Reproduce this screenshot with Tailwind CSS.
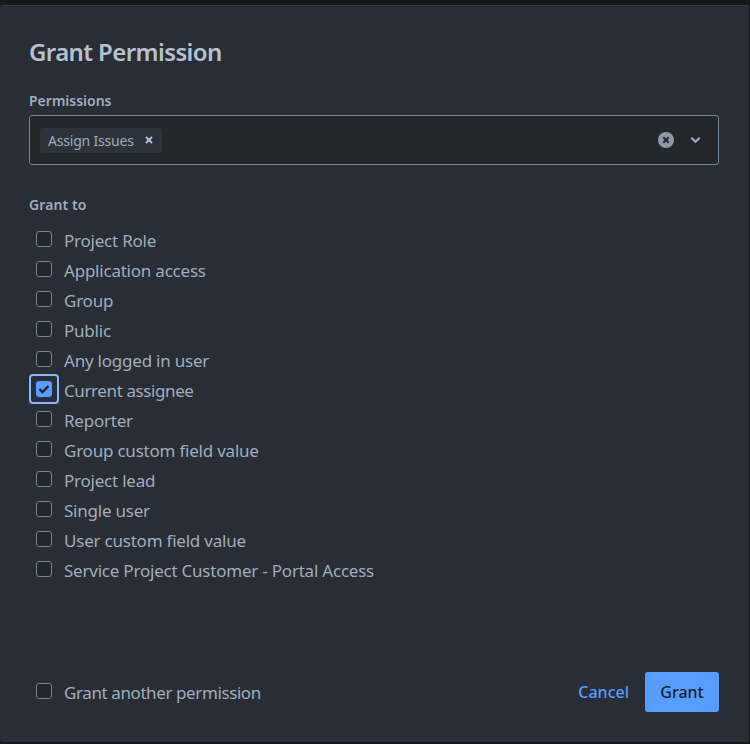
<!DOCTYPE html>
<html><head><meta charset="utf-8">
<script src="https://cdn.jsdelivr.net/npm/@tailwindcss/browser@4"></script>
</head>
<body class="m-0 bg-[#16181b]">
<div class="w-[750px] h-[744px] overflow-hidden bg-[#16191c] pt-[5px] font-['Noto_Sans',sans-serif]">
  <div class="w-[749px] h-[737px] rounded-[3px] bg-[#292e36] border-t border-[#343b44] px-[29px] flex flex-col">
    <h1 class="mt-[30px] h-[32px] leading-[32px] text-[24px] font-semibold tracking-[-0.6px] text-[#b6c2cf]">Grant Permission</h1>
    <div class="mt-[23px] h-[20px] leading-[20px] text-[14px] font-semibold text-[#9fadbc]">Permissions</div>
    <div class="mt-[4px] h-[50px] w-[690px] rounded-[3px] border border-[#738496] bg-[#22272b] flex items-center pl-[10px] pr-[17px]">
      <div class="h-[25px] rounded-[3px] bg-[#2c333a] flex items-center pl-[8px] pr-[9px] text-[14px] tracking-[-0.2px] text-[#9fadbc]">
        <span>Assign Issues</span>
        <svg class="ml-[11px]" width="8" height="8" viewBox="0 0 8 8"><path d="M1 1L7 7M7 1L1 7" stroke="#b6c2cf" stroke-width="2"/></svg>
      </div>
      <svg class="ml-auto" width="16" height="16" viewBox="0 0 16 16"><circle cx="8" cy="8" r="8" fill="#8c9bab"/><path d="M5.3 5.3L10.7 10.7M10.7 5.3L5.3 10.7" stroke="#22272b" stroke-width="2"/></svg>
      <svg class="ml-[16px]" width="11" height="8" viewBox="0 0 11 8"><path d="M1.3 1.7L5.5 5.7L9.7 1.7" fill="none" stroke="#9fadbc" stroke-width="2.2"/></svg>
    </div>
    <div class="mt-[30px] h-[20px] leading-[20px] text-[14px] font-semibold tracking-[0.1px] text-[#9fadbc]">Grant to</div>
    <ul class="mt-[10px] flex flex-col text-[#9fadbc] text-[17px] tracking-[-0.22px]">
      <li class="h-[30px] pt-[2px] flex items-center"><span class="ml-[7px] mb-[4px] w-[14px] h-[14px] box-content rounded-[3px] border border-[#738496] bg-[#22272b]"></span><span class="ml-[12px]">Project Role</span></li>
      <li class="h-[30px] pt-[2px] flex items-center"><span class="ml-[7px] mb-[4px] w-[14px] h-[14px] box-content rounded-[3px] border border-[#738496] bg-[#22272b]"></span><span class="ml-[12px]">Application access</span></li>
      <li class="h-[30px] pt-[2px] flex items-center"><span class="ml-[7px] mb-[4px] w-[14px] h-[14px] box-content rounded-[3px] border border-[#738496] bg-[#22272b]"></span><span class="ml-[12px]">Group</span></li>
      <li class="h-[30px] pt-[2px] flex items-center"><span class="ml-[7px] mb-[4px] w-[14px] h-[14px] box-content rounded-[3px] border border-[#738496] bg-[#22272b]"></span><span class="ml-[12px]">Public</span></li>
      <li class="h-[30px] pt-[2px] flex items-center"><span class="ml-[7px] mb-[4px] w-[14px] h-[14px] box-content rounded-[3px] border border-[#738496] bg-[#22272b]"></span><span class="ml-[12px]">Any logged in user</span></li>
      <li class="h-[30px] pt-[2px] flex items-center">
        <span class="mb-[4px] w-[30px] h-[30px] shrink-0 rounded-[4px] border-2 border-[#85b8ff] flex items-center justify-center"><span class="w-[16px] h-[16px] rounded-[3px] bg-[#579dff] flex items-center justify-center"><svg width="12" height="10" viewBox="0 0 12 10"><path d="M1.5 5L4.5 8L10.5 2" fill="none" stroke="#1d2125" stroke-width="2.4"/></svg></span></span>
        <span class="ml-[5px] tracking-[-0.4px]">Current assignee</span>
      </li>
      <li class="h-[30px] pt-[2px] flex items-center"><span class="ml-[7px] mb-[4px] w-[14px] h-[14px] box-content rounded-[3px] border border-[#738496] bg-[#22272b]"></span><span class="ml-[12px]">Reporter</span></li>
      <li class="h-[30px] pt-[2px] flex items-center"><span class="ml-[7px] mb-[4px] w-[14px] h-[14px] box-content rounded-[3px] border border-[#738496] bg-[#22272b]"></span><span class="ml-[12px]">Group custom field value</span></li>
      <li class="h-[30px] pt-[2px] flex items-center"><span class="ml-[7px] mb-[4px] w-[14px] h-[14px] box-content rounded-[3px] border border-[#738496] bg-[#22272b]"></span><span class="ml-[12px]">Project lead</span></li>
      <li class="h-[30px] pt-[2px] flex items-center"><span class="ml-[7px] mb-[4px] w-[14px] h-[14px] box-content rounded-[3px] border border-[#738496] bg-[#22272b]"></span><span class="ml-[12px]">Single user</span></li>
      <li class="h-[30px] pt-[2px] flex items-center"><span class="ml-[7px] mb-[4px] w-[14px] h-[14px] box-content rounded-[3px] border border-[#738496] bg-[#22272b]"></span><span class="ml-[12px]">User custom field value</span></li>
      <li class="h-[30px] pt-[2px] flex items-center"><span class="ml-[7px] mb-[4px] w-[14px] h-[14px] box-content rounded-[3px] border border-[#738496] bg-[#22272b]"></span><span class="ml-[12px]">Service Project Customer - Portal Access</span></li>
    </ul>
    <div class="mt-[87px] w-[690px] h-[40px] flex items-center text-[17px]">
      <span class="ml-[7px] mb-[2px] w-[14px] h-[14px] box-content rounded-[3px] border border-[#738496] bg-[#22272b]"></span>
      <span class="ml-[12px] mt-[2px] tracking-[-0.4px] text-[#9fadbc]">Grant another permission</span>
      <span class="ml-auto text-[#579dff] font-medium text-[16px]">Cancel</span>
      <span class="ml-[16px] w-[74px] h-[40px] rounded-[3px] bg-[#579dff] text-[#1d2125] font-medium text-[16px] flex items-center justify-center">Grant</span>
    </div>
  </div>
</div>
</body></html>
